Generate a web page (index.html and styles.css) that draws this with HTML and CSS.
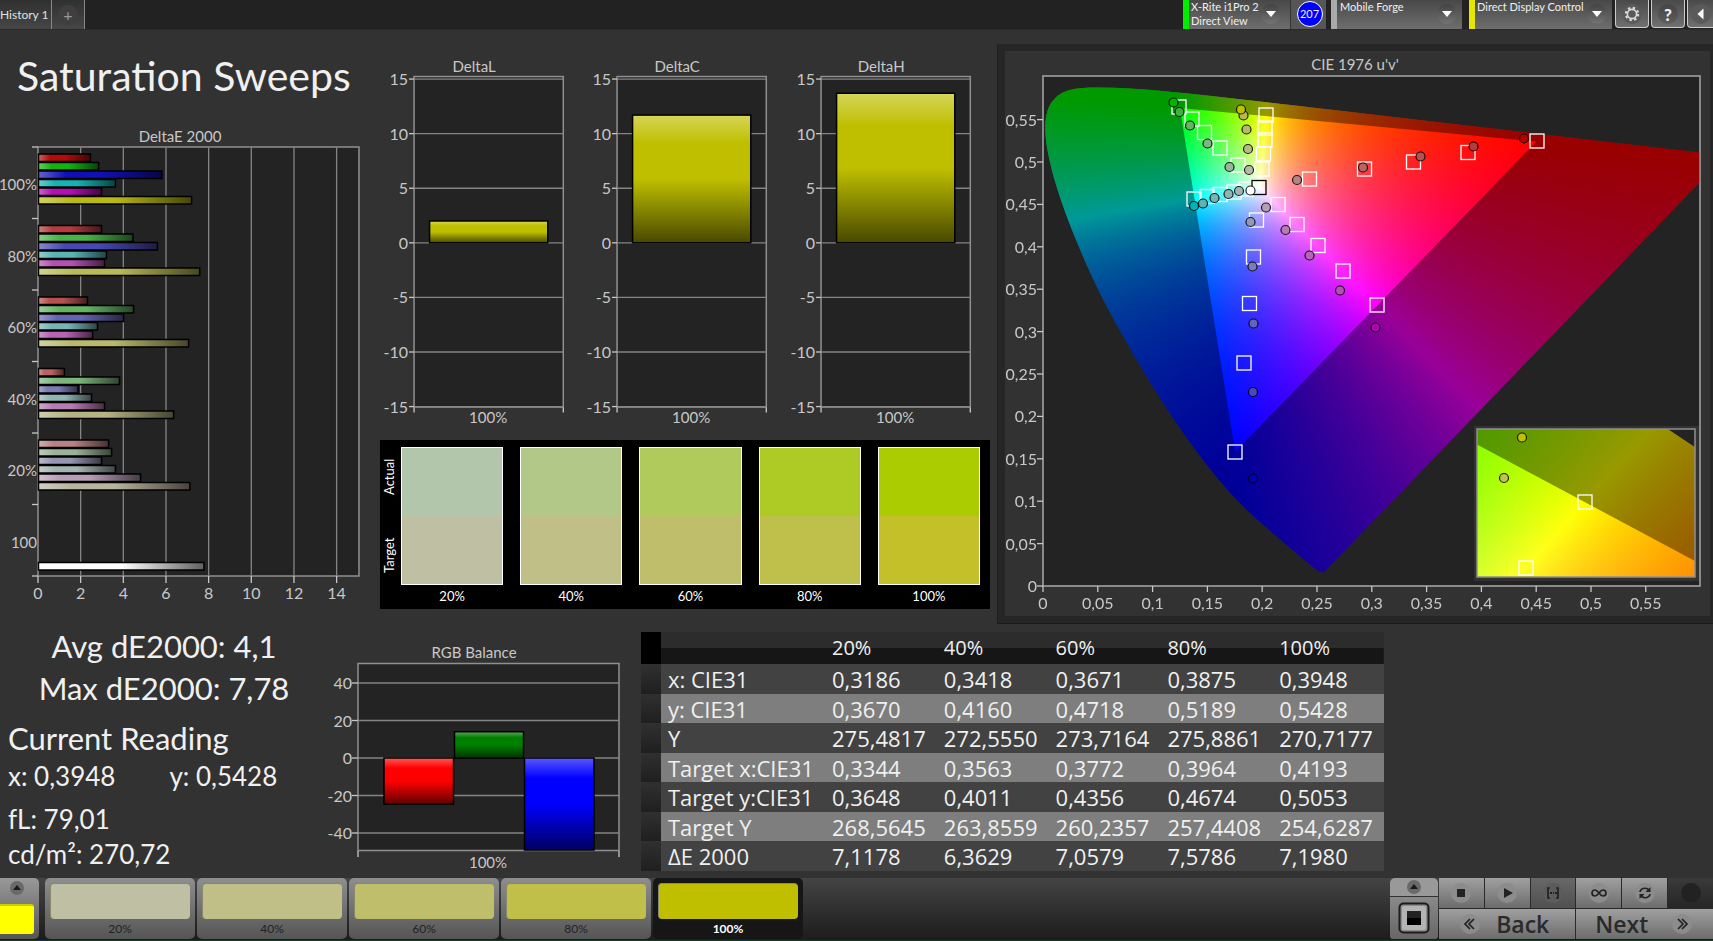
FILE: index.html
```html
<!DOCTYPE html>
<html lang="en">
<head>
<meta charset="utf-8">
<title>Saturation Sweeps</title>
<link rel="stylesheet" href="styles.css">
</head>
<body>
<header class="topbar">
  <nav class="tabs">
    <button class="tab">History 1</button>
    <button class="tab tab-add" aria-label="Add tab"><span class="disc">+</span></button>
  </nav>
  <div class="devices">
    <button class="device meter"><span class="device-name">X-Rite i1Pro 2<br>Direct View</span><span class="disc"><i class="caret"></i></span></button>
    <span class="count"><b>207</b></span>
    <button class="device source"><span class="device-name">Mobile Forge</span><span class="disc"><i class="caret"></i></span></button>
    <button class="device display"><span class="device-name">Direct Display Control</span><span class="disc"><i class="caret"></i></span></button>
    <button class="tool" aria-label="Settings"><svg viewBox="0 0 24 24" width="24" height="24"><circle cx="12" cy="12" r="10" class="tool-disc"/><circle cx="12" cy="12" r="4.6" fill="none" stroke="#ddd" stroke-width="1.6"/><circle cx="12" cy="12" r="6.2" fill="none" stroke="#ddd" stroke-width="2" stroke-dasharray="2.4 2.47"/></svg></button>
    <button class="tool tool-help" aria-label="Help"><span class="disc">?</span></button>
    <button class="tool tool-cut" aria-label="Collapse"><svg viewBox="0 0 24 24" width="24" height="24"><circle cx="12" cy="12" r="10" class="tool-disc"/><path d="M14.500 6.500v11l-6-5.500z" fill="#fff"/></svg></button>
  </div>
</header>

<main>
  <div class="upper">
    <section class="sweep">
      <h1>Saturation Sweeps</h1>
      <svg id="deltaE" class="chart" viewBox="0 0 380 490" role="img" aria-label="DeltaE 2000"></svg>
    </section>
    <section class="middle">
      <div class="deltas">
        <svg class="chart delta" viewBox="0 0 203 380" data-title="DeltaL" data-value="2"></svg>
        <svg class="chart delta" viewBox="0 0 203 380" data-title="DeltaC" data-value="11.700"></svg>
        <svg class="chart delta" viewBox="0 0 203 380" data-title="DeltaH" data-value="13.700"></svg>
      </div>
      <div class="compare">
        <div class="sides"><span>Actual</span><span>Target</span></div>
        <div class="pairs">
          <figure><div class="pair p20"></div><figcaption>20%</figcaption></figure>
          <figure><div class="pair p40"></div><figcaption>40%</figcaption></figure>
          <figure><div class="pair p60"></div><figcaption>60%</figcaption></figure>
          <figure><div class="pair p80"></div><figcaption>80%</figcaption></figure>
          <figure><div class="pair p100"></div><figcaption>100%</figcaption></figure>
        </div>
      </div>
    </section>
    <section class="cie-panel">
      <div class="cie">
        <svg id="cie" class="chart" viewBox="0 0 705 565" role="img" aria-label="CIE 1976 u'v'"></svg>
      </div>
    </section>
  </div>

  <div class="lower">
    <section class="readings">
      <p class="big">Avg dE2000: 4,1</p>
      <p class="big">Max dE2000: 7,78</p>
      <h2>Current Reading</h2>
      <p class="pairline"><span>x: 0,3948</span><span>y: 0,5428</span></p>
      <p class="fl">fL: 79,01</p>
      <p>cd/m²: 270,72</p>
    </section>
    <section>
      <svg id="rgb" class="chart" viewBox="0 0 321 238" role="img" aria-label="RGB Balance"></svg>
    </section>
    <table>
      <colgroup><col class="c-mark"><col class="c-label"><col><col><col><col><col></colgroup>
      <thead><tr><td></td><td></td><th>20%</th><th>40%</th><th>60%</th><th>80%</th><th>100%</th></tr></thead>
      <tbody>
        <tr><td></td><th>x: CIE31</th><td>0,3186</td><td>0,3418</td><td>0,3671</td><td>0,3875</td><td>0,3948</td></tr>
        <tr><td></td><th>y: CIE31</th><td>0,3670</td><td>0,4160</td><td>0,4718</td><td>0,5189</td><td>0,5428</td></tr>
        <tr><td></td><th>Y</th><td>275,4817</td><td>272,5550</td><td>273,7164</td><td>275,8861</td><td>270,7177</td></tr>
        <tr><td></td><th>Target x:CIE31</th><td>0,3344</td><td>0,3563</td><td>0,3772</td><td>0,3964</td><td>0,4193</td></tr>
        <tr><td></td><th>Target y:CIE31</th><td>0,3648</td><td>0,4011</td><td>0,4356</td><td>0,4674</td><td>0,5053</td></tr>
        <tr><td></td><th>Target Y</th><td>268,5645</td><td>263,8559</td><td>260,2357</td><td>257,4408</td><td>254,6287</td></tr>
        <tr><td></td><th>ΔE 2000</th><td>7,1178</td><td>6,3629</td><td>7,0579</td><td>7,5786</td><td>7,1980</td></tr>
      </tbody>
    </table>
  </div>
</main>

<footer class="dock">
  <button class="picker" aria-label="Current colour"><svg viewBox="0 0 16 16" width="16" height="16"><circle cx="8" cy="8" r="7" fill="#6a6a6a"/><path d="M4 10l4-5 4 5z" fill="#1a1a1a"/></svg><span class="now"></span></button>
  <div class="steps">
    <button class="step s20"><span></span>20%</button>
    <button class="step s40"><span></span>40%</button>
    <button class="step s60"><span></span>60%</button>
    <button class="step s80"><span></span>80%</button>
    <button class="step s100 active"><span></span>100%</button>
  </div>
  <button class="stopbox" aria-label="Stop menu">
    <svg viewBox="0 0 16 16" width="16" height="16"><circle cx="8" cy="8" r="7" fill="#6a6a6a"/><path d="M4 10l4-5 4 5z" fill="#1a1a1a"/></svg>
    <svg viewBox="0 0 32 32" width="32" height="32"><rect x="1.500" y="1.500" width="29" height="29" rx="4" fill="#8c8c8c" stroke="#1c1c1c" stroke-width="2"/><rect x="4" y="4" width="24" height="24" rx="2" fill="#b4b4b4"/><path d="M9 9h14v14H9z" fill="#000"/><path d="M9 9h14v7H9z" fill="#222"/></svg>
  </button>
  <div class="transport">
    <button aria-label="Stop"><svg viewBox="0 0 24 24"><circle cx="12" cy="12" r="10"/><path d="M8 8h8v8H8z"/></svg></button>
    <button aria-label="Play"><svg viewBox="0 0 24 24"><circle cx="12" cy="12" r="10"/><path d="M9 7l9 5-9 5z"/></svg></button>
    <button class="dim" aria-label="Read range"><svg viewBox="0 0 24 24"><circle cx="12" cy="12" r="10"/><path class="line" d="M9 7H7v10h2M15 7h2v10h-2"/><path d="M9 11h2v2H9zM12 11h1v2h-1zM14 11h2v2h-2z"/></svg></button>
    <button aria-label="Continuous"><svg viewBox="0 0 24 24"><circle cx="12" cy="12" r="10"/><path class="line" d="M12 12c-1.500-2-2.500-3-4-3a3 3 0 0 0 0 6c1.500 0 2.500-1 4-3s2.500-3 4-3a3 3 0 0 1 0 6c-1.500 0-2.500-1-4-3z"/></svg></button>
    <button aria-label="Repeat"><svg viewBox="0 0 24 24"><circle cx="12" cy="12" r="10"/><path class="line" d="M7 11c.5-3.500 5-5 8.500-2.500M17 13c-.5 3.500-5 5-8.500 2.500"/><path d="M17.500 6v5h-5zM6.500 18v-5h5z"/></svg></button>
    <button class="off" aria-label="Record"><svg viewBox="0 0 24 24"><circle cx="12" cy="12" r="10"/></svg></button>
    <button class="wide back"><svg viewBox="0 0 24 24"><circle cx="12" cy="12" r="10"/><path class="line" d="M12 7l-5 5 5 5M16 7l-5 5 5 5"/></svg>Back</button>
    <button class="wide">Next<svg viewBox="0 0 24 24"><circle cx="12" cy="12" r="10"/><path class="line" d="M8 7l5 5-5 5M12 7l5 5-5 5"/></svg></button>
  </div>
</footer>
<script src="charts.js"></script>
</body>
</html>
```
FILE: styles.css
```css
* { box-sizing: border-box; }
body {
  margin: 0;
  min-height: 100vh;
  display: flex;
  flex-direction: column;
  background: #323232;
  color: #f0f0f0;
  font-family: Lato, "Open Sans", sans-serif;
  overflow-x: hidden;
}
button {
  margin: 0;
  padding: 0;
  border: 0;
  color: inherit;
  font-family: inherit;
}
h1, h2, p, figure { margin: 0; font-weight: 400; }

/* top bar */
.topbar {
  display: flex;
  justify-content: space-between;
  height: 30px;
  background: #222;
  border-bottom: 1px solid #2a2a2a;
}
.tabs, .devices { display: flex; }
.tab {
  width: 52px;
  height: 29px;
  padding-right: 5px;
  text-align: right;
  white-space: nowrap;
  font-size: 12px;
  color: #e0e0e0;
  background: linear-gradient(#303030, #464646);
  border-right: 1px solid #888;
}
.tab-add { width: 33px; padding: 0; display: grid; place-items: center; }
.disc {
  flex: none;
  width: 20px;
  height: 20px;
  border-radius: 50%;
  display: grid;
  place-items: center;
  background: linear-gradient(#444, #5e5e5e);
}
.tab-add .disc { background: #3f3f3f; color: #999; font-size: 16px; line-height: 16px; }
.device {
  display: flex;
  justify-content: space-between;
  height: 29px;
  padding: 0 9px 0 2px;
  text-align: left;
  background: linear-gradient(#484848, #6e6e6e);
  border-left: 6px solid #0e0;
  font-size: 11px;
  line-height: 14px;
  white-space: nowrap;
}
.device .disc { margin-top: 4px; background: linear-gradient(#424242, #747474); }
.caret { border: 5px solid transparent; border-top: 6px solid #fff; border-bottom: 0; }
.meter { width: 107px; }
.source { width: 131px; margin-right: 7px; padding: 0 5px 0 3px; border-color: #aaa; }
.display { width: 143px; border-color: #e6e600; margin-right: 3px; padding-right: 5px; }
.count {
  width: 36px;
  height: 29px;
  margin-right: 5px;
  padding: 1px 0 0 2px;
  display: grid;
  place-items: start center;
  background: #565656;
  border-left: 1px solid #333;
}
.count b {
  width: 26px;
  height: 26px;
  border: 1px solid #fff;
  border-radius: 50%;
  background: #00f;
  font-size: 11px;
  font-weight: 400;
  line-height: 24px;
  text-align: center;
}
.tool {
  width: 34px;
  height: 28px;
  margin-right: 2px;
  display: grid;
  place-items: center;
  background: linear-gradient(#4a4a4a, #707070);
  border: 1px solid #ccc;
  border-top: 0;
  border-radius: 0 0 4px 4px;
}
.tool-disc { fill: #5a5a5a; }
.tool-help { font-size: 17px; font-weight: 900; }
.tool-cut { width: 26px; margin-right: 0; border-right: 0; border-radius: 0 0 0 4px; }

/* upper area */
main { flex: 1; }
.upper { display: grid; grid-template-columns: 380fr 617fr 716fr; padding-top: 14px; }
.chart { display: block; width: 100%; height: auto; }
.chart text { fill: #c8c8c8; font-size: 16px; }
.chart .t { font-size: 15px; }
.chart .mid { text-anchor: middle; }
.chart .end { text-anchor: end; }
.sweep h1 { padding: 4px 0 0 17px; font-size: 41px; line-height: 56px; height: 76px; white-space: nowrap; }
.middle { padding-right: 7px; }
.deltas { display: grid; grid-template-columns: repeat(3, 1fr); height: 396px; }
.compare {
  display: flex;
  padding: 7px 10px 3px 0;
  background: #000;
  color: #fff;
  font-size: 13px;
}
.pairs { flex: 1; display: grid; grid-template-columns: repeat(5, 1fr); gap: 17px; }
.pairs figure { text-align: center; line-height: 20px; }
.pair { height: 138px; border: 1px solid #fff; margin-bottom: 1px; }
.sides {
  width: 21px;
  height: 138px;
  padding: 12px 0 12px 3px;
  display: flex;
  flex-direction: row-reverse;
  justify-content: space-between;
  align-items: center;
  writing-mode: vertical-rl;
  transform: rotate(180deg);
  line-height: 18px;
}
.p20 { background: linear-gradient(#b1c6aa 50%, #bfbfa3 50%); }
.p40 { background: linear-gradient(#b1c888 50%, #bfbf87 50%); }
.p60 { background: linear-gradient(#b0ca5c 50%, #bfbf6b 50%); }
.p80 { background: linear-gradient(#adcb24 50%, #bfbf4c 50%); }
.p100 { background: linear-gradient(#abcc00 50%, #c3c02a 50%); }
.cie-panel { padding: 7px 3px 7px 7px; background: #262626; border-left: 1px solid #1e1e1e; border-bottom: 1px solid #1a1a1a; }
.cie { background: #323232; }
.plot { fill: #232323; stroke: #909090; stroke-width: 1.5; }
.grid { stroke: #858585; stroke-width: 1.3; }
.tick { stroke: #c8c8c8; stroke-width: 1.3; }

/* lower area */
.lower { display: grid; grid-template-columns: 320fr 321fr 743fr 329fr; align-items: start; padding-top: 8px; }
.readings { padding-left: 8px; font-size: 26px; line-height: 34px; white-space: nowrap; }
.big { margin-bottom: 14px; font-size: 31px; line-height: 28px; text-align: center; }
.readings h2 { margin-top: 17px; font-size: 31px; line-height: 38px; }
.pairline { display: flex; gap: 54px; line-height: 38px; }
.fl { margin-top: 6px; line-height: 36px; }
table {
  width: 100%;
  border-collapse: collapse;
  table-layout: fixed;
  font-family: "Open Sans", "Noto Sans", sans-serif;
  font-size: 22px;
  line-height: 28px;
}
.c-mark { width: 20px; }
.c-label { width: 164px; }
th { font-weight: 400; text-align: left; }
td, th { padding: 0 0 0 7px; height: 30px; white-space: nowrap; }
thead td, thead th { height: 32px; font-size: 20px; }
thead tr { background: linear-gradient(#2c2c2c 50%, #161616 50%); }
thead td:first-child { background: #000; }
tbody tr { background: #424242; }
tbody tr:nth-child(even) { background: #7e7e7e; }
tbody tr:nth-child(even) > * { height: 29px; }
tbody td:first-child { background: linear-gradient(#303030, #1f1f1f); }

/* bottom dock */
.dock {
  display: flex;
  height: 63px;
  padding-bottom: 1px;
  background: linear-gradient(#444, #1c1c1c);
  border-bottom: 1px solid #123c26;
}
.picker {
  width: 39px;
  height: 61px;
  display: flex;
  flex-direction: column;
  align-items: center;
  gap: 8px;
  padding: 2px 5px 5px 0;
  background: linear-gradient(#999, #555);
  border-radius: 0 5px 5px 0;
}
.now { width: 34px; height: 30px; background: #ff0; border-radius: 0 3px 3px 0; border-top: 2px solid #cc0; }
.steps { flex: 1; display: flex; gap: 2px; padding-left: 6px; }
.step {
  width: 150px;
  padding: 5px 5px 0;
  display: flex;
  flex-direction: column;
  align-items: center;
  background: linear-gradient(#8e8e8e, #555);
  border-radius: 5px;
  font-size: 12px;
  line-height: 20px;
  color: #222;
}
.step span { flex: none; width: 100%; height: 36px; border-radius: 4px; border: 1px solid #88886a; border-width: 1px 0 0 1px; }
.s20 span { background: #bfbfa3; }
.s40 span { background: #bfbf87; }
.s60 span { background: #bfbf6b; }
.s80 span { background: #bfbf4a; }
.s100 span { background: #bfbf00; }
.step.active { background: #161616; color: #fff; font-weight: 700; }
.stopbox {
  width: 48px;
  margin-right: 1px;
  display: flex;
  flex-direction: column;
  align-items: center;
  gap: 7px;
  padding-top: 1px;
  background: linear-gradient(#999 18px, #333 18px, #333 19px, #8a8a8a 19px, #666);
  border-radius: 5px 5px 3px 3px;
}
.transport {
  width: 274px;
  display: grid;
  grid-template-columns: repeat(6, 1fr);
  grid-template-rows: 30px 30px;
  gap: 1px;
  background: #2a2a2a;
}
.transport button {
  display: grid;
  place-items: center;
  background: linear-gradient(#a0a0a0, #6c6c6c);
}
.transport svg { width: 24px; height: 24px; fill: #222; }
.transport circle { fill: #8c8c8c; }
.transport .line { fill: none; stroke: #222; stroke-width: 1.7; }
.transport .dim { background: linear-gradient(#686868, #505050); }
.transport .dim circle { fill: #5c5c5c; }
.transport .off { background: linear-gradient(#3a3a3a, #262626); }
.transport .off circle { fill: #222; }
.transport .wide {
  grid-column: span 3;
  display: flex;
  align-items: center;
  justify-content: center;
  gap: 22px;
  font-family: "Open Sans", sans-serif;
  font-size: 23px;
  line-height: 30px;
  font-weight: 600;
  color: #2a2a2a;
}
.transport .back { padding-right: 7px; gap: 14px; }
```
FILE: charts.js
```js
const NS = 'http://www.w3.org/2000/svg';

function add(parent, name, attrs, text) {
  const el = document.createElementNS(NS, name);
  for (const key in attrs) el.setAttribute(key, attrs[key]);
  if (text !== undefined) el.textContent = text;
  parent.appendChild(el);
  return el;
}
const line = (p, x1, y1, x2, y2, cls) => add(p, 'line', { x1, y1, x2, y2, class: cls });
const label = (p, x, y, text, cls) => add(p, 'text', { x, y, class: cls }, text);

let shadeCount = 0;
function shade(svg, vertical) {
  const id = 'shade' + shadeCount++;
  const g = add(svg, 'linearGradient', { id, x1: 0, y1: 0, x2: vertical ? 0 : 1, y2: vertical ? 1 : 0 });
  add(g, 'stop', { offset: 0, 'stop-color': '#fff', 'stop-opacity': .35 });
  add(g, 'stop', { offset: .22, 'stop-color': '#fff', 'stop-opacity': 0 });
  add(g, 'stop', { offset: .5, 'stop-color': '#000', 'stop-opacity': 0 });
  add(g, 'stop', { offset: 1, 'stop-color': '#000', 'stop-opacity': .62 });
  return `url(#${id})`;
}
function bar(svg, x, y, width, height, color, fill) {
  add(svg, 'rect', { x, y, width, height, fill: color });
  add(svg, 'rect', { x, y, width, height, fill, stroke: '#000', 'stroke-width': 1.5 });
}

/* DeltaE 2000 by saturation level */
(function () {
  const svg = document.getElementById('deltaE');
  const left = 38, right = 359, top = 27, bottom = 456, unit = 21.33, band = 71.5;
  const fill = shade(svg, false);
  label(svg, 180, 22, 'DeltaE 2000', 't mid');
  add(svg, 'rect', { x: left, y: top, width: right - left, height: bottom - top, class: 'plot' });
  for (let v = 0; v <= 14; v += 2) {
    const x = left + v * unit;
    if (v) line(svg, x, top, x, bottom, 'grid');
    line(svg, x, bottom, x, bottom + 7, 'tick');
    label(svg, x, 479, v, 'mid');
  }
  const groups = [
    ['100%', [2.46, 2.84, 5.81, 3.63, 2.98, 7.2], ['#b40c0c', '#12b412', '#1010b8', '#12b4b4', '#b40fb4', '#b9b912']],
    ['80%', [2.98, 4.45, 5.6, 3.21, 3.12, 7.58], ['#b43c3c', '#48b448', '#4848b4', '#5ab4b4', '#b450b4', '#b9b955']],
    ['60%', [2.32, 4.48, 4.01, 2.79, 2.56, 7.06], ['#b85050', '#64b464', '#6464b4', '#78b4b4', '#b864b4', '#b9b96e']],
    ['40%', [1.24, 3.82, 1.88, 2.51, 3.12, 6.36], ['#b86464', '#7cb47c', '#7c7cb8', '#90b4b4', '#b87cb4', '#b4b482']],
    ['20%', [3.31, 3.45, 2.98, 3.63, 4.81, 7.12], ['#b88282', '#9ab49a', '#9696b4', '#a4b4b4', '#b89cb4', '#b8b4a0']],
    ['100', [0, 0, 0, 0, 0, 0, 7.78], ['', '', '', '', '', '', '#ffffff']]
  ];
  groups.forEach(([name, values, colors], i) => {
    const y = top + i * band;
    line(svg, left - 6, y, left, y, 'tick');
    label(svg, left - 1, y + 43, name, 't end');
    values.forEach((v, k) => {
      if (v) bar(svg, left + .5, y + 7 + k * 8.5, v * unit - .5, 7.5, colors[k], fill);
    });
  });
  line(svg, left - 6, bottom, left, bottom, 'tick');
})();

/* DeltaL, DeltaC, DeltaH */
document.querySelectorAll('.delta').forEach(svg => {
  const y = v => 198.5 - v * 10.9;
  const fill = shade(svg, true);
  label(svg, 94, 28, svg.dataset.title, 't mid');
  add(svg, 'rect', { x: 34, y: 32.5, width: 149, height: 330, class: 'plot' });
  for (let v = -15; v <= 15; v += 5) {
    line(svg, 34, y(v), 183, y(v), 'grid');
    line(svg, 29, y(v), 34, y(v), 'tick');
    label(svg, 28, y(v) + 6, v, 'end');
  }
  const v = +svg.dataset.value;
  bar(svg, 49.5, y(v), 118, v * 10.9, '#bfbf00', fill);
  line(svg, 34, 363, 34, 368, 'tick');
  line(svg, 183, 363, 183, 368, 'tick');
  label(svg, 108, 378, '100%', 't mid');
});

/* RGB balance */
(function () {
  const svg = document.getElementById('rgb');
  const y = v => 126 - v * 1.875;
  const fill = shade(svg, true);
  label(svg, 154, 26, 'RGB Balance', 't mid');
  add(svg, 'rect', { x: 38, y: 31.5, width: 261, height: 187, class: 'plot' });
  for (let v = -40; v <= 40; v += 20) {
    line(svg, 38, y(v), 299, y(v), 'grid');
    line(svg, 32, y(v), 38, y(v), 'tick');
    label(svg, 32, y(v) + 6, v, 'end');
  }
  bar(svg, 64, y(0), 69.5, 46, '#ff0000', fill);
  bar(svg, 134.5, y(14), 69, 26.5, '#008000', fill);
  bar(svg, 204.5, y(0), 69.5, 92, '#0000ff', fill);
  line(svg, 38, 219, 38, 225, 'tick');
  line(svg, 299, 219, 299, 225, 'tick');
  label(svg, 168, 236, '100%', 't mid');
})();

/* chromaticity diagrams */
const LOCUS = [
  [.1741, .0050], [.1733, .0048], [.1714, .0051], [.1689, .0069], [.1644, .0109], [.1566, .0177], [.1440, .0297],
  [.1355, .0399], [.1241, .0578], [.1096, .0868], [.0913, .1327], [.0687, .2007], [.0454, .2950], [.0235, .4127],
  [.0082, .5384], [.0039, .6548], [.0139, .7502], [.0389, .8120], [.0743, .8338], [.1142, .8262], [.1547, .8059],
  [.2296, .7543], [.3016, .6923], [.3731, .6245], [.4441, .5547], [.5125, .4866], [.5752, .4242], [.6270, .3725],
  [.6658, .3340], [.6915, .3083], [.7190, .2809], [.7347, .2653]
];
const GAMUT = [[.64, .33], [.3, .6], [.15, .06]];
const toUV = ([x, y]) => { const d = -2 * x + 12 * y + 3; return [4 * x / d, 9 * y / d]; };
const fromUV = (u, v) => { const d = 6 * u - 16 * v + 12; return [9 * u / d, 4 * v / d]; };
const same = p => p;

function rgbAt(x, y) {
  const X = x / y, Z = (1 - x - y) / y;
  const c = [3.2406 * X - 1.5372 - .4986 * Z, -.9689 * X + 1.8758 + .0415 * Z, .0557 * X - .204 + 1.057 * Z]
    .map(n => Math.max(0, n));
  const m = Math.max(...c);
  return c.map(n => 255 * n / m);
}

function trace(ctx, pts, smooth) {
  ctx.beginPath();
  ctx.moveTo(...pts[0]);
  for (let i = 1; i < pts.length; i++) {
    if (smooth && i < pts.length - 1) {
      const [a, b] = [pts[i], pts[i + 1]];
      ctx.quadraticCurveTo(a[0], a[1], (a[0] + b[0]) / 2, (a[1] + b[1]) / 2);
    } else ctx.lineTo(...pts[i]);
  }
  ctx.closePath();
}

function chroma(svg, box, range, toPlot, toXY) {
  const [bx, by, w, h] = box, [x0, x1, y0, y1] = range;
  const fo = add(svg, 'foreignObject', { x: bx, y: by, width: w, height: h });
  const canvas = document.createElement('canvas');
  canvas.width = w; canvas.height = h;
  canvas.style.display = 'block';
  fo.appendChild(canvas);
  const full = document.createElement('canvas');
  full.width = w; full.height = h;
  const fctx = full.getContext('2d'), img = fctx.createImageData(w, h);
  for (let j = 0, k = 0; j < h; j++) for (let i = 0; i < w; i++, k += 4) {
    const [x, y] = toXY(x0 + (i + .5) / w * (x1 - x0), y1 - (j + .5) / h * (y1 - y0));
    const c = rgbAt(x, y);
    img.data[k] = c[0]; img.data[k + 1] = c[1]; img.data[k + 2] = c[2]; img.data[k + 3] = 255;
  }
  fctx.putImageData(img, 0, 0);
  const px = p => { const [a, b] = toPlot(p); return [(a - x0) / (x1 - x0) * w, (y1 - b) / (y1 - y0) * h]; };
  const ctx = canvas.getContext('2d');
  trace(ctx, LOCUS.map(px), true);
  ctx.clip();
  ctx.drawImage(full, 0, 0);
  ctx.fillStyle = 'rgba(0,0,0,.4)';
  ctx.fillRect(0, 0, w, h);
  trace(ctx, GAMUT.map(px), false);
  ctx.clip();
  ctx.drawImage(full, 0, 0);
}

(function () {
  const svg = document.getElementById('cie');
  const ox = 38, oy = 25, w = 657, h = 510;
  label(svg, 350, 19, "CIE 1976 u'v'", 't mid');
  add(svg, 'rect', { x: ox, y: oy, width: w, height: h, class: 'plot' });
  chroma(svg, [ox, oy, w, h], [0, .6, 0, .6], toUV, fromUV);
  add(svg, 'rect', { x: ox, y: oy, width: w, height: h, class: 'plot', style: 'fill:none' });
  for (let i = 0; i < 12; i++) {
    const name = String(+(i * .05).toFixed(2)).replace('.', ',');
    const x = ox + i * 54.8, y = oy + h - i * 42.4;
    line(svg, x, oy + h, x, oy + h + 6, 'tick');
    label(svg, x, oy + h + 23, name, 'mid');
    line(svg, ox - 6, y, ox, y, 'tick');
    label(svg, ox - 6, y + 6, name, 'end');
  }
  const g = add(svg, 'g', { transform: `translate(${ox} ${oy})` });
  const square = (p, x, y, c) => add(p, 'rect', { x: x - 7, y: y - 7, width: 14, height: 14, fill: 'none', stroke: c || '#fff', 'stroke-width': 1.3 });
  const dot = (p, x, y, c) => add(p, 'circle', { cx: x, cy: y, r: 4.5, fill: c, stroke: '#000', 'stroke-opacity': .85, 'stroke-width': 1.2 });
  [[136, 31], [149, 43], [161.5, 56.5], [177, 72], [195, 89], [223, 39], [222, 52], [222, 64], [220.5, 78], [219, 93],
   [151, 123], [164, 120.5], [177, 118.5], [191, 116], [203, 113], [235, 128.5], [254, 148.5], [275, 169.5], [300, 195],
   [334, 229], [266.5, 103], [321.5, 93], [370.5, 86], [425, 76.5], [494, 65], [213.5, 144], [210.5, 181],
   [206.5, 227.5], [201, 287], [192, 376]].forEach(([x, y]) => square(g, x, y));
  square(g, 216, 111.5, '#000');
  [[130.5, 26.5, '#00b400'], [136.5, 36, '#3cb43c'], [147, 49.5, '#64b464'], [164.5, 67.5, '#80b480'], [186.5, 91, '#9ab49a'],
   [200.5, 39.5, '#b9b94a'], [198, 33.5, '#c3c000'], [203.5, 53.5, '#b9b96e'], [205, 73, '#b9b987'], [206, 94, '#b9b9a0'],
   [151, 130, '#00b4b4'], [160, 127.5, '#5ab4b4'], [171.5, 122, '#78b4b4'], [185.5, 118, '#90b4b4'], [196, 115, '#a4b4b4'],
   [254, 104, '#b88282'], [320, 91.5, '#b86464'], [377.5, 80.5, '#b85050'], [430.5, 70.5, '#b43c3c'], [481, 62.5, '#b40000'],
   [223, 131.5, '#b89cb4'], [242.5, 154, '#b87cb4'], [266.5, 179.5, '#b864b4'], [297, 214.5, '#b450b4'], [332.5, 251.5, '#b400b4'],
   [207.5, 146, '#9696b8'], [209.5, 190.5, '#7c7cb8'], [210.5, 247.5, '#6464b8'], [210, 316, '#4848b8'], [210, 402.5, '#0000b4'],
   [207.5, 114.5, '#ffffff']].forEach(([x, y, c]) => dot(g, x, y, c));

  /* magnified view around the selected target, in CIE 1931 xy */
  const ix = 472, iy = 378;
  add(svg, 'rect', { x: ix - 3, y: iy - 3, width: 225, height: 155, fill: '#323232' });
  add(svg, 'rect', { x: ix, y: iy, width: 218, height: 148, fill: '#232323' });
  chroma(svg, [ix, iy, 218, 148], [.3774, .462, .4621, .5474], same, (x, y) => [x, y]);
  const m = add(svg, 'g', { transform: `translate(${ix} ${iy})` });
  square(m, 108, 73);
  square(m, 49, 139);
  dot(m, 45, 8.5, '#c3c000');
  dot(m, 27, 49, '#c3c050');
  add(svg, 'rect', { x: ix, y: iy, width: 218, height: 148, class: 'plot', style: 'fill:none' });
})();
```
